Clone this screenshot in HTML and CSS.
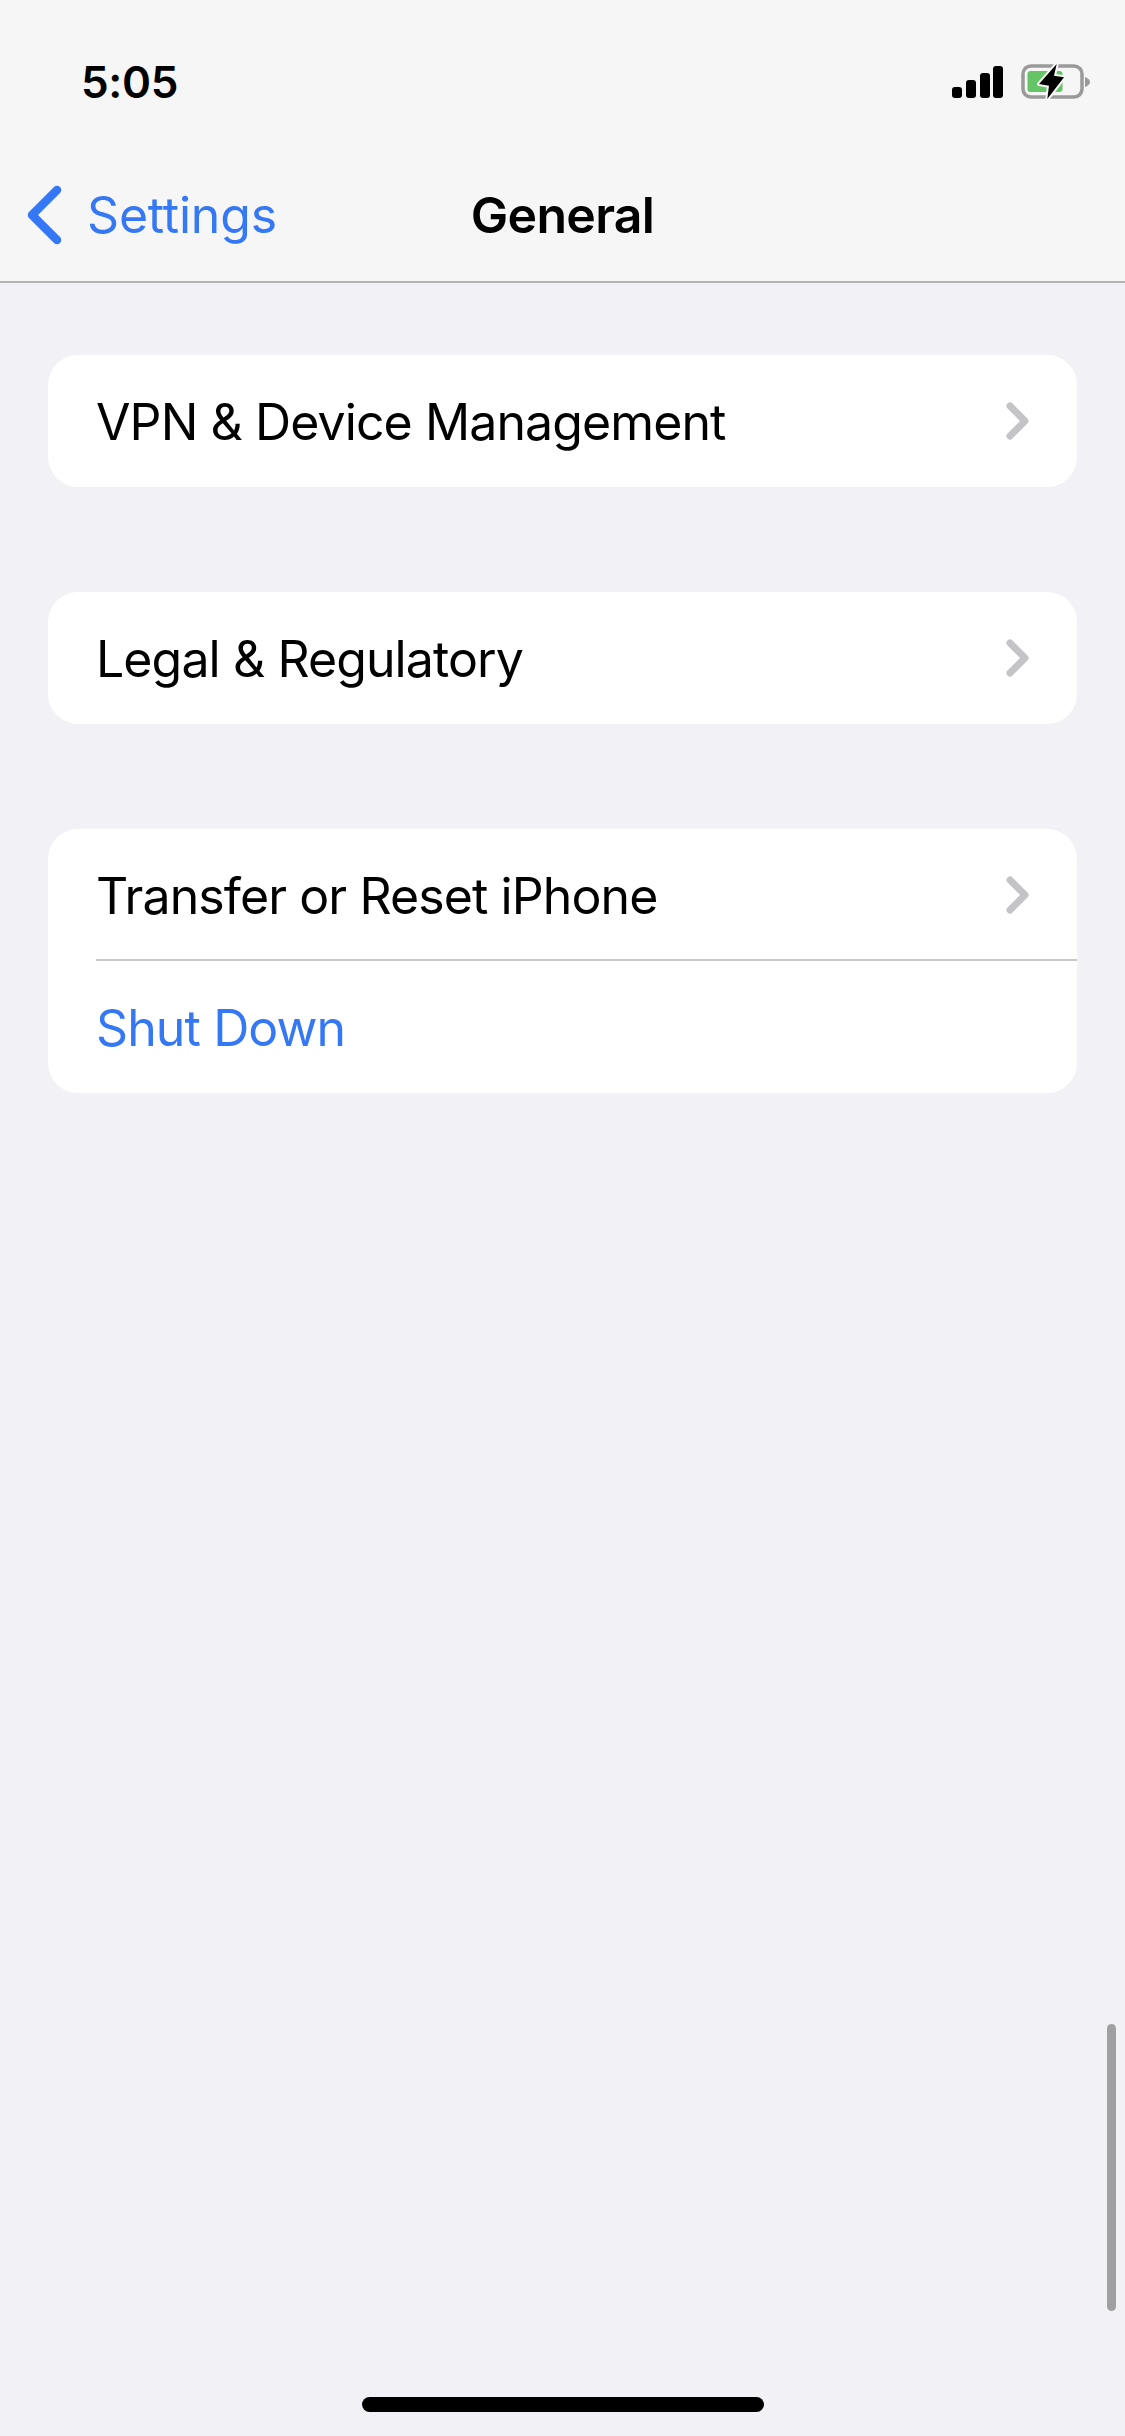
FILE: index.html
```html
<!DOCTYPE html>
<html lang="en">
<head>
    <meta charset="UTF-8">
    <meta name="viewport" content="width=device-width, initial-scale=1.0">
    <title>General</title>
    <link rel="stylesheet" href="styles.css">
</head>
<body>
    <div class="screen">
        <header class="top">
            <div class="status">
                <span class="time">5:05</span>
                <div class="status-icons">
                    <svg class="signal" width="51" height="32" viewBox="0 0 51 32">
                        <rect x="0" y="21" width="10" height="11" rx="3"/>
                        <rect x="14" y="14" width="10" height="18" rx="3"/>
                        <rect x="28" y="7" width="10" height="25" rx="3"/>
                        <rect x="41" y="0" width="10" height="32" rx="3"/>
                    </svg>
                    <svg class="battery" width="70" height="38" viewBox="0 0 70 38">
                        <rect x="2" y="3" width="59" height="31" rx="8" fill="none" stroke="#9a9a9a" stroke-width="3.5"/>
                        <path d="M64 14 Q69 16 69 19 Q69 22 64 24Z" fill="#9a9a9a"/>
                        <rect x="6.5" y="8" width="35" height="21" rx="3" fill="#65c466"/>
                        <path d="M35.7 1 L18 21 L28 22.7 L26.3 36 L43 14.3 L33 12.7Z" fill="#000" stroke="#f7f7f7" stroke-width="4" stroke-linejoin="round" paint-order="stroke"/>
                    </svg>
                </div>
            </div>
            <nav class="navbar">
                <a class="back">
                    <svg width="42" height="60" viewBox="0 0 42 60">
                        <path d="M33 5 L8 30 L33 55" fill="none" stroke="#3478f6" stroke-width="8.5" stroke-linecap="round" stroke-linejoin="round"/>
                    </svg>
                    <span>Settings</span>
                </a>
                <h1 class="title">General</h1>
            </nav>
        </header>

        <main class="content">
            <ul class="group">
                <li class="row">
                    <span>VPN &amp; Device Management</span>
                    <svg class="chevron" width="24" height="38" viewBox="0 0 24 38"><path d="M4 4 L19 19 L4 34"/></svg>
                </li>
            </ul>
            <ul class="group">
                <li class="row">
                    <span>Legal &amp; Regulatory</span>
                    <svg class="chevron" width="24" height="38" viewBox="0 0 24 38"><path d="M4 4 L19 19 L4 34"/></svg>
                </li>
            </ul>
            <ul class="group">
                <li class="row row-split">
                    <span>Transfer or Reset iPhone</span>
                    <svg class="chevron" width="24" height="38" viewBox="0 0 24 38"><path d="M4 4 L19 19 L4 34"/></svg>
                </li>
                <li class="row row-action">
                    <span>Shut Down</span>
                </li>
            </ul>
        </main>

        <div class="scrollbar"></div>
        <div class="home-bar"></div>
    </div>
</body>
</html>
```

FILE: styles.css
```css
* { box-sizing: border-box; }
html, body { margin: 0; padding: 0; }
body { font-family: Inter, "Liberation Sans", sans-serif; background-color: #f1f1f6; color: #000; }
.screen { position: relative; width: 1125px; height: 2436px; overflow: hidden; }

.top { height: 283px; background-color: #f6f6f6; border-bottom: 2px solid #b4b4b6; }
.status { display: flex; justify-content: space-between; align-items: center; height: 164px; padding: 0 34px 0 81px; }
.time { font-size: 44px; font-weight: 600; letter-spacing: -0.3px; line-height: 164px; }
.status-icons { display: flex; align-items: center; gap: 18px; }
.signal { fill: #000; }
.navbar { position: relative; display: flex; justify-content: center; align-items: center; height: 60px; margin-top: 21px; }
.back { position: absolute; left: 24px; top: 0; display: flex; align-items: center; gap: 21px; color: #3478f6; font-size: 50px; letter-spacing: -0.2px; }
.back svg { display: block; }
.title { margin: 0; font-size: 50px; font-weight: 600; letter-spacing: -0.7px; }

.content { display: flex; flex-direction: column; gap: 105px; padding: 72px 48px 0; }
.group { list-style: none; margin: 0; padding: 0; background: white; border-radius: 30px; overflow: hidden; }
.row { display: flex; justify-content: space-between; align-items: center; height: 132px; margin-left: 48px; padding-right: 47px; font-size: 50px; letter-spacing: -0.9px; }
.row span { padding-top: 2px; }
.row-split { padding-top: 2px; border-bottom: 2px solid #c8c8ca; }
.row-action { color: #3478f6; }
.chevron { fill: none; stroke: #c4c4c6; stroke-width: 7; stroke-linecap: round; stroke-linejoin: round; }

.scrollbar { position: absolute; left: 1107px; top: 2024px; width: 9px; height: 287px; border-radius: 5px; background-color: #a0a0a2; }
.home-bar { position: absolute; left: 362px; top: 2397px; width: 402px; height: 15px; border-radius: 8px; background-color: #000; }
```
